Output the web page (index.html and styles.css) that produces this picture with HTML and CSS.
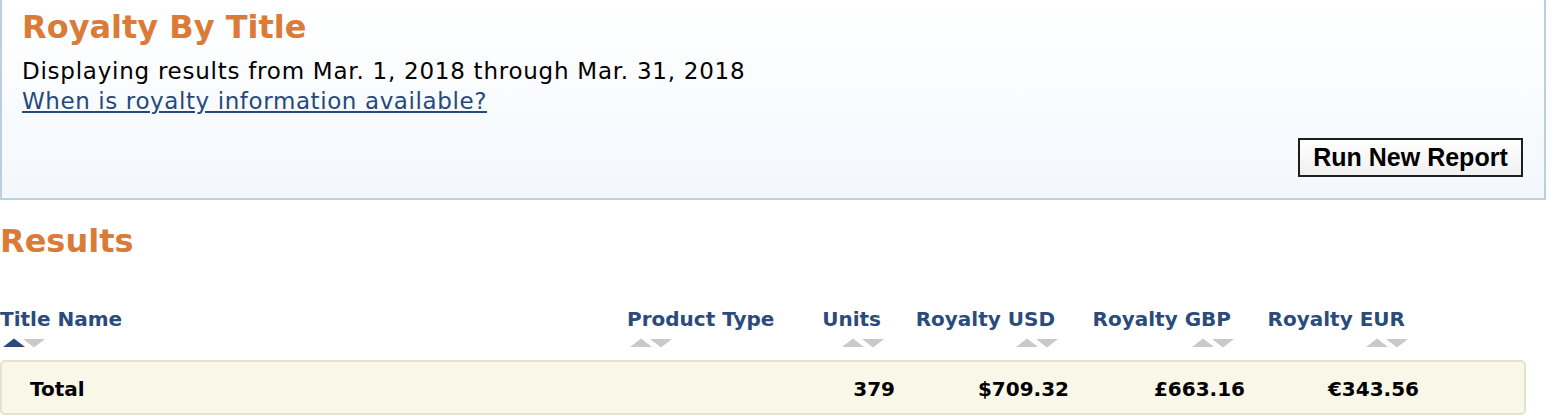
FILE: index.html
```html
<!DOCTYPE html>
<html>
<head>
<meta charset="utf-8">
<link rel="stylesheet" href="styles.css">
</head>
<body>
<div class="page">
  <section class="summary">
    <h1 class="title">Royalty By Title</h1>
    <p class="range">Displaying results from Mar. 1, 2018 through Mar. 31, 2018</p>
    <a class="info-link" href="#">When is royalty information available?</a>
    <div class="actions">
      <button class="run-btn" type="button">Run New Report</button>
    </div>
  </section>

  <h2 class="results-title">Results</h2>

  <div class="grid header-row">
    <div class="hcell left">
      <span class="hlabel">Title Name</span>
      <svg class="sorter" width="46" height="10" viewBox="0 0 46 10"><polygon class="on" points="3,9 14,0.5 25,9"/><polygon class="off" points="23,1 45,1 34,9.5"/></svg>
    </div>
    <div class="hcell left">
      <span class="hlabel">Product Type</span>
      <svg class="sorter" width="46" height="10" viewBox="0 0 46 10"><polygon class="off" points="3,9 14,0.5 25,9"/><polygon class="off" points="23,1 45,1 34,9.5"/></svg>
    </div>
    <div class="hcell right">
      <span class="hlabel">Units</span>
      <svg class="sorter" width="46" height="10" viewBox="0 0 46 10"><polygon class="off" points="3,9 14,0.5 25,9"/><polygon class="off" points="23,1 45,1 34,9.5"/></svg>
    </div>
    <div class="hcell right">
      <span class="hlabel">Royalty USD</span>
      <svg class="sorter" width="46" height="10" viewBox="0 0 46 10"><polygon class="off" points="3,9 14,0.5 25,9"/><polygon class="off" points="23,1 45,1 34,9.5"/></svg>
    </div>
    <div class="hcell right">
      <span class="hlabel">Royalty GBP</span>
      <svg class="sorter" width="46" height="10" viewBox="0 0 46 10"><polygon class="off" points="3,9 14,0.5 25,9"/><polygon class="off" points="23,1 45,1 34,9.5"/></svg>
    </div>
    <div class="hcell right">
      <span class="hlabel">Royalty EUR</span>
      <svg class="sorter" width="46" height="10" viewBox="0 0 46 10"><polygon class="off" points="3,9 14,0.5 25,9"/><polygon class="off" points="23,1 45,1 34,9.5"/></svg>
    </div>
  </div>

  <div class="total-row">
    <div class="grid">
      <div class="tcell total-label">Total</div>
      <div class="tcell"></div>
      <div class="tcell num">379</div>
      <div class="tcell num">$709.32</div>
      <div class="tcell num">£663.16</div>
      <div class="tcell num">€343.56</div>
    </div>
  </div>
</div>
</body>
</html>
```

FILE: styles.css
```css
html, body {
  margin: 0;
  padding: 0;
  background: #ffffff;
}

body {
  font-family: "DejaVu Sans", Verdana, sans-serif;
  color: #000;
}

.page {
  width: 1562px;
}

.summary {
  width: 1546px;
  box-sizing: border-box;
  border: 2px solid #b9d1de;
  border-top: 0;
  background: linear-gradient(to bottom, #ffffff 0%, #f3f8fd 100%);
  padding: 7px 21px 21px 20px;
}

.title {
  margin: 0 0 9px 0;
  font-size: 32px;
  line-height: 40px;
  font-weight: bold;
  color: #db7b38;
}

.range {
  margin: 0;
  font-size: 23px;
  line-height: 30px;
  letter-spacing: 0.75px;
}

.info-link {
  display: inline-block;
  font-size: 23px;
  line-height: 30px;
  letter-spacing: 0.6px;
  color: #26497a;
  text-decoration: underline;
}

.actions {
  display: flex;
  justify-content: flex-end;
  margin-top: 22px;
}

.run-btn {
  width: 225px;
  height: 39px;
  border: 2px solid #1e1e1e;
  background: linear-gradient(to bottom, #ffffff 0%, #f0f0f0 100%);
  font-family: "Liberation Sans", Arial, sans-serif;
  font-weight: bold;
  font-size: 25px;
  color: #000;
  padding: 0;
  border-radius: 0;
}

.results-title {
  margin: 21px 0 0 0;
  font-size: 32px;
  line-height: 40px;
  font-weight: bold;
  color: #db7b38;
}

.grid {
  display: grid;
  grid-template-columns: 627px 173px 84px 174px 176px 174px;
}

.header-row {
  margin-top: 46px;
}

.hcell {
  display: flex;
  flex-direction: column;
}

.hcell.left {
  align-items: flex-start;
}

.hcell.right {
  align-items: flex-end;
}

.hlabel {
  font-size: 20px;
  line-height: 24px;
  font-weight: bold;
  color: #2b4b7b;
  white-space: nowrap;
}

.hcell.right .hlabel {
  padding-right: 3px;
}

.sorter {
  display: block;
  margin-top: 7px;
}

.hcell.right .sorter {
  margin-right: -1px;
}

.sorter .on {
  fill: #2c4b7a;
}

.sorter .off {
  fill: #c9c9c9;
}

.total-row {
  margin-top: 12px;
  width: 1526px;
  height: 55px;
  box-sizing: border-box;
  border: 2px solid #e6e3cb;
  border-radius: 5px;
  background: #f9f7e8;
  padding-left: 9px;
  padding-top: 3px;
  display: flex;
  align-items: center;
}

.tcell {
  font-size: 20px;
  line-height: 24px;
  font-weight: bold;
  white-space: nowrap;
}

.total-label {
  padding-left: 19px;
}

.num {
  text-align: right;
}
```
